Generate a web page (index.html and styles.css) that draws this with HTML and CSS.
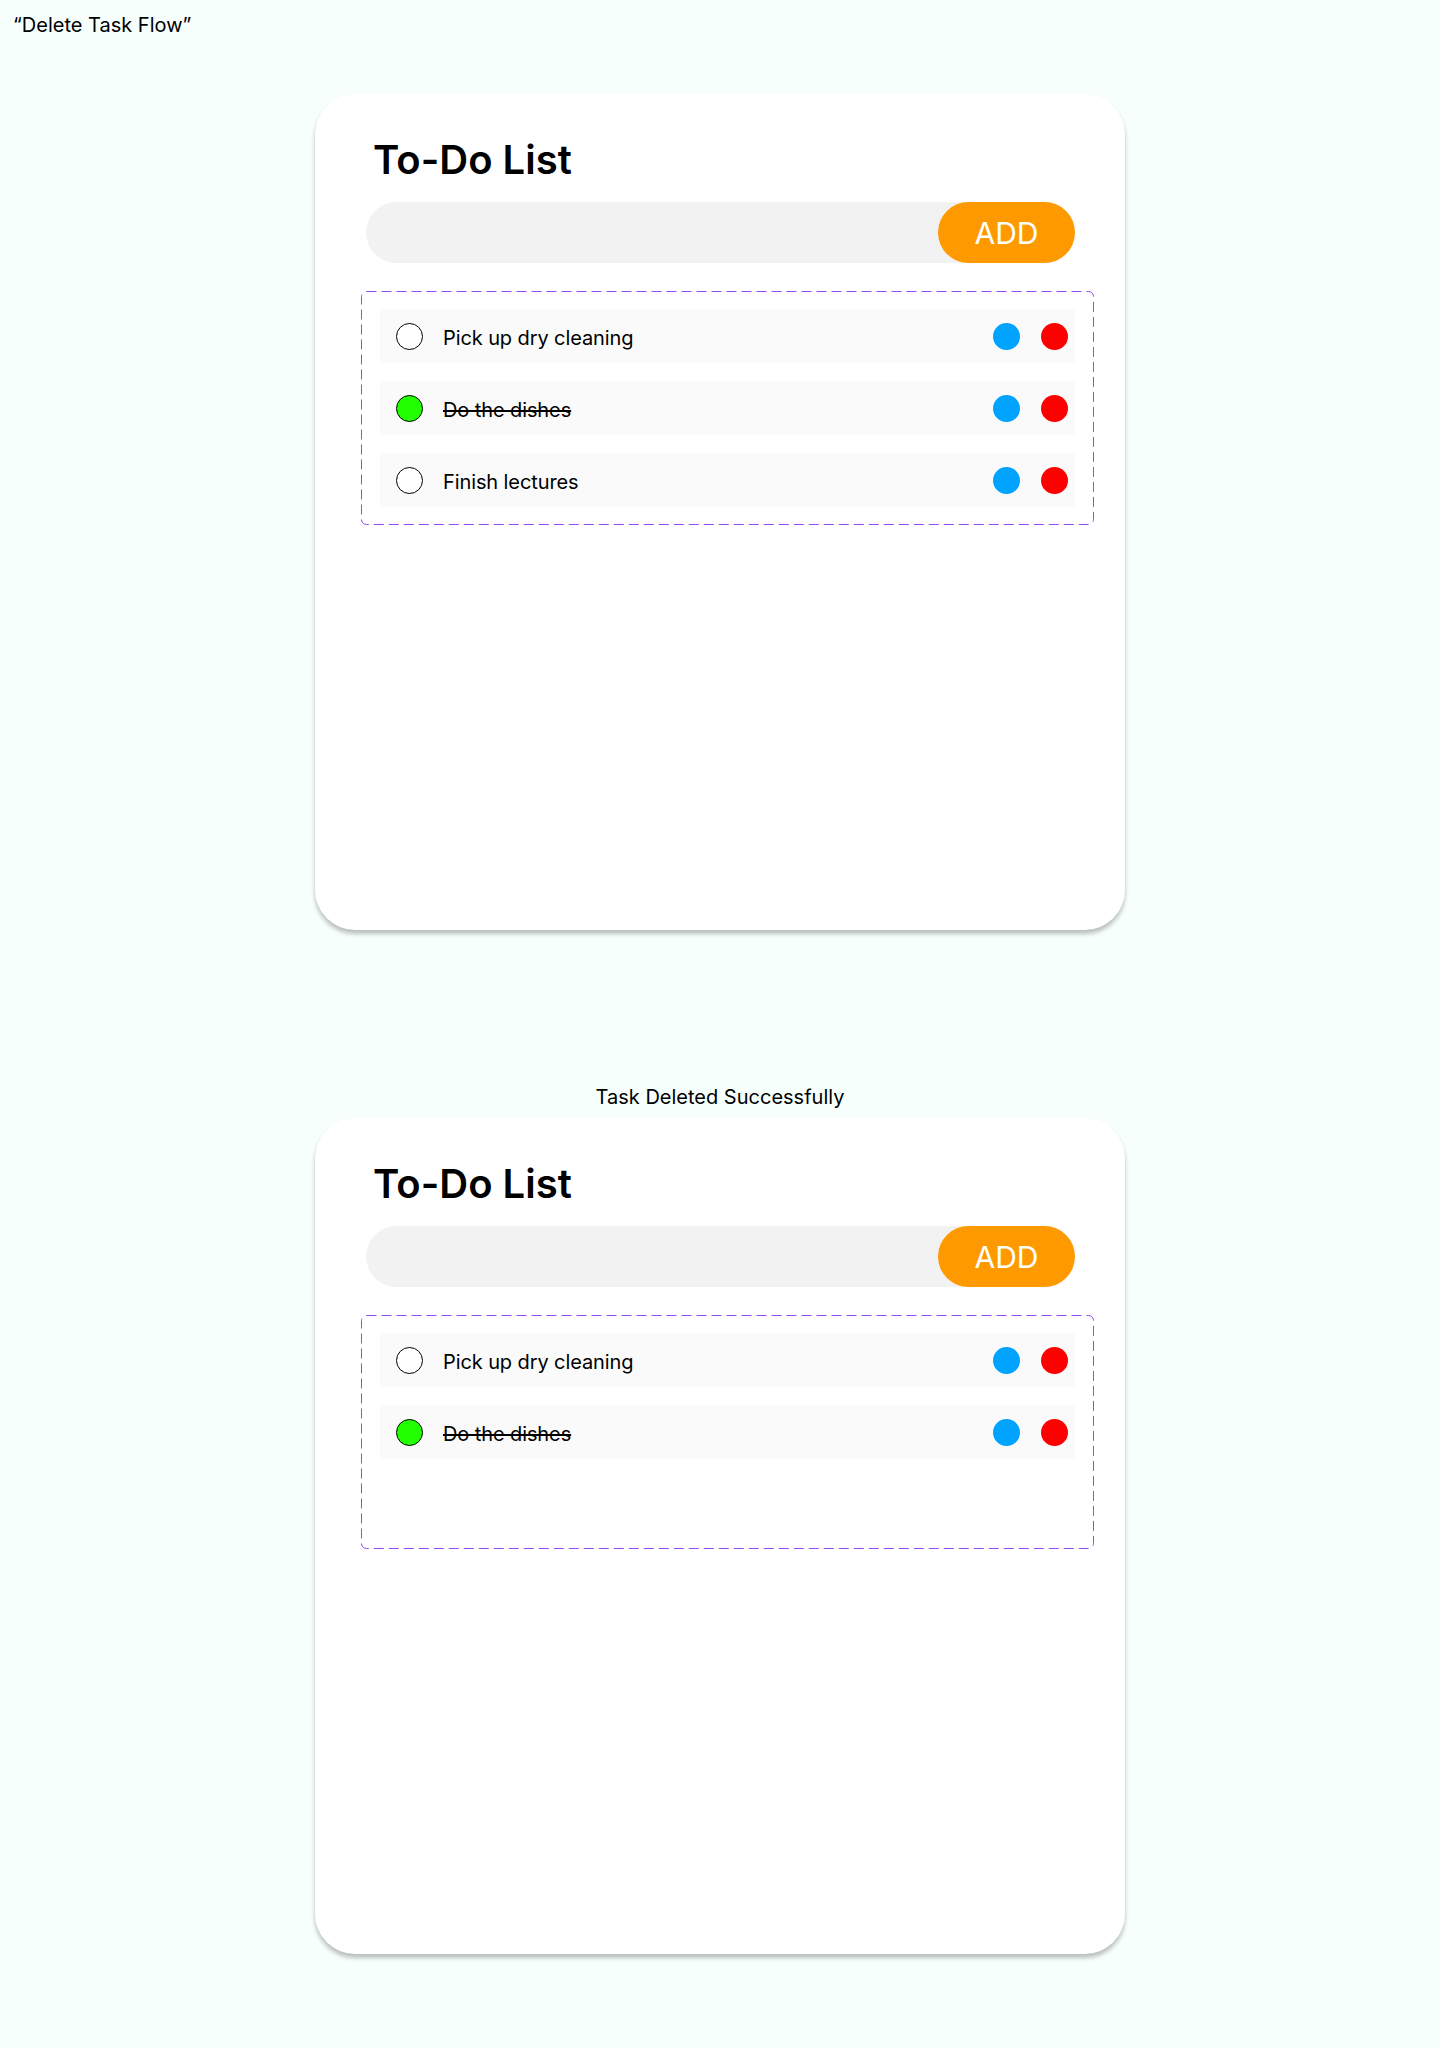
FILE: index.html
```html
<!DOCTYPE html>
<html lang="en">
<head>
<meta charset="utf-8">
<title>Delete Task Flow</title>
<link rel="stylesheet" href="styles.css">
</head>
<body>
<div class="flow-title">“Delete Task Flow”</div>

<section class="card card-first">
  <h1 class="title">To-Do List</h1>
  <div class="input-bar">
    <button class="add-btn">ADD</button>
  </div>
  <div class="task-box">
    <svg class="dash" aria-hidden="true"><rect class="dash-rect" x="0.5" y="0.5" rx="5" ry="5"></rect></svg>
    <div class="task">
      <span class="check"></span>
      <span class="task-text">Pick up dry cleaning</span>
      <span class="dot dot-blue"></span>
      <span class="dot dot-red"></span>
    </div>
    <div class="task">
      <span class="check check-done"></span>
      <span class="task-text done">Do the dishes</span>
      <span class="dot dot-blue"></span>
      <span class="dot dot-red"></span>
    </div>
    <div class="task">
      <span class="check"></span>
      <span class="task-text">Finish lectures</span>
      <span class="dot dot-blue"></span>
      <span class="dot dot-red"></span>
    </div>
  </div>
</section>

<div class="status">Task Deleted Successfully</div>

<section class="card card-second">
  <h1 class="title">To-Do List</h1>
  <div class="input-bar">
    <button class="add-btn">ADD</button>
  </div>
  <div class="task-box">
    <svg class="dash" aria-hidden="true"><rect class="dash-rect" x="0.5" y="0.5" rx="5" ry="5"></rect></svg>
    <div class="task">
      <span class="check"></span>
      <span class="task-text">Pick up dry cleaning</span>
      <span class="dot dot-blue"></span>
      <span class="dot dot-red"></span>
    </div>
    <div class="task">
      <span class="check check-done"></span>
      <span class="task-text done">Do the dishes</span>
      <span class="dot dot-blue"></span>
      <span class="dot dot-red"></span>
    </div>
  </div>
</section>
</body>
</html>
```

FILE: styles.css
```css
* { box-sizing: border-box; }

html, body {
  margin: 0;
  padding: 0;
}

body {
  background: #F7FFFD;
  font-family: Inter, "Noto Sans", "Liberation Sans", sans-serif;
  color: #000;
  min-height: 2048px;
}

.flow-title {
  font-size: 20px;
  line-height: 24px;
  padding: 13px 0 0 13px;
  height: 94px;
}

.card {
  width: 810px;
  height: 836px;
  margin: 0 auto;
  background: #FFFFFF;
  border-radius: 40px;
  box-shadow: 0 4px 4px rgba(0, 0, 0, 0.25);
  padding: 42px 31px 0 46px;
  display: flex;
  flex-direction: column;
}

.title {
  margin: 0 0 0 12px;
  font-size: 40px;
  line-height: 48px;
  font-weight: 600;
}

.input-bar {
  margin: 18px 19px 0 5px;
  height: 61px;
  background: #F2F2F2;
  border-radius: 31px;
  display: flex;
  justify-content: flex-end;
}

.add-btn {
  width: 137px;
  height: 61px;
  border: none;
  border-radius: 31px;
  background: #FF9900;
  color: #FFFFFF;
  font-family: Inter, "Noto Sans", "Liberation Sans", sans-serif;
  font-size: 30px;
  font-weight: 400;
  padding: 0;
}

.task-box {
  position: relative;
  margin-top: 28px;
  height: 234px;
  padding: 19px;
  display: flex;
  flex-direction: column;
  gap: 20px;
}

.dash {
  position: absolute;
  left: 0;
  top: 0;
  width: 100%;
  height: 100%;
  overflow: visible;
  pointer-events: none;
}

.dash-rect {
  width: calc(100% - 1px);
  height: calc(100% - 1px);
  fill: none;
  stroke: #9747FF;
  stroke-width: 1;
  stroke-dasharray: 10 5;
}

.task {
  height: 52px;
  background: #FAFAFA;
  display: flex;
  align-items: center;
  padding: 0 7px 0 16px;
}

.check {
  width: 27px;
  height: 27px;
  border-radius: 50%;
  border: 1px solid #000;
  background: #FFFFFF;
  flex: none;
}

.check-done {
  background: #22FF00;
}

.task-text {
  margin-left: 20px;
  font-size: 20px;
  line-height: 24px;
  letter-spacing: -0.1px;
  padding-top: 3px;
  flex: 1;
}

.task-text.done {
  text-decoration: line-through;
  text-decoration-thickness: 1.5px;
}

.dot {
  width: 27px;
  height: 27px;
  border-radius: 50%;
  flex: none;
}

.dot-blue {
  background: #00A3FF;
}

.dot-red {
  background: #FF0000;
  margin-left: 21px;
}

.status {
  margin-top: 155px;
  text-align: center;
  font-size: 20px;
  line-height: 24px;
  height: 33px;
}
```
